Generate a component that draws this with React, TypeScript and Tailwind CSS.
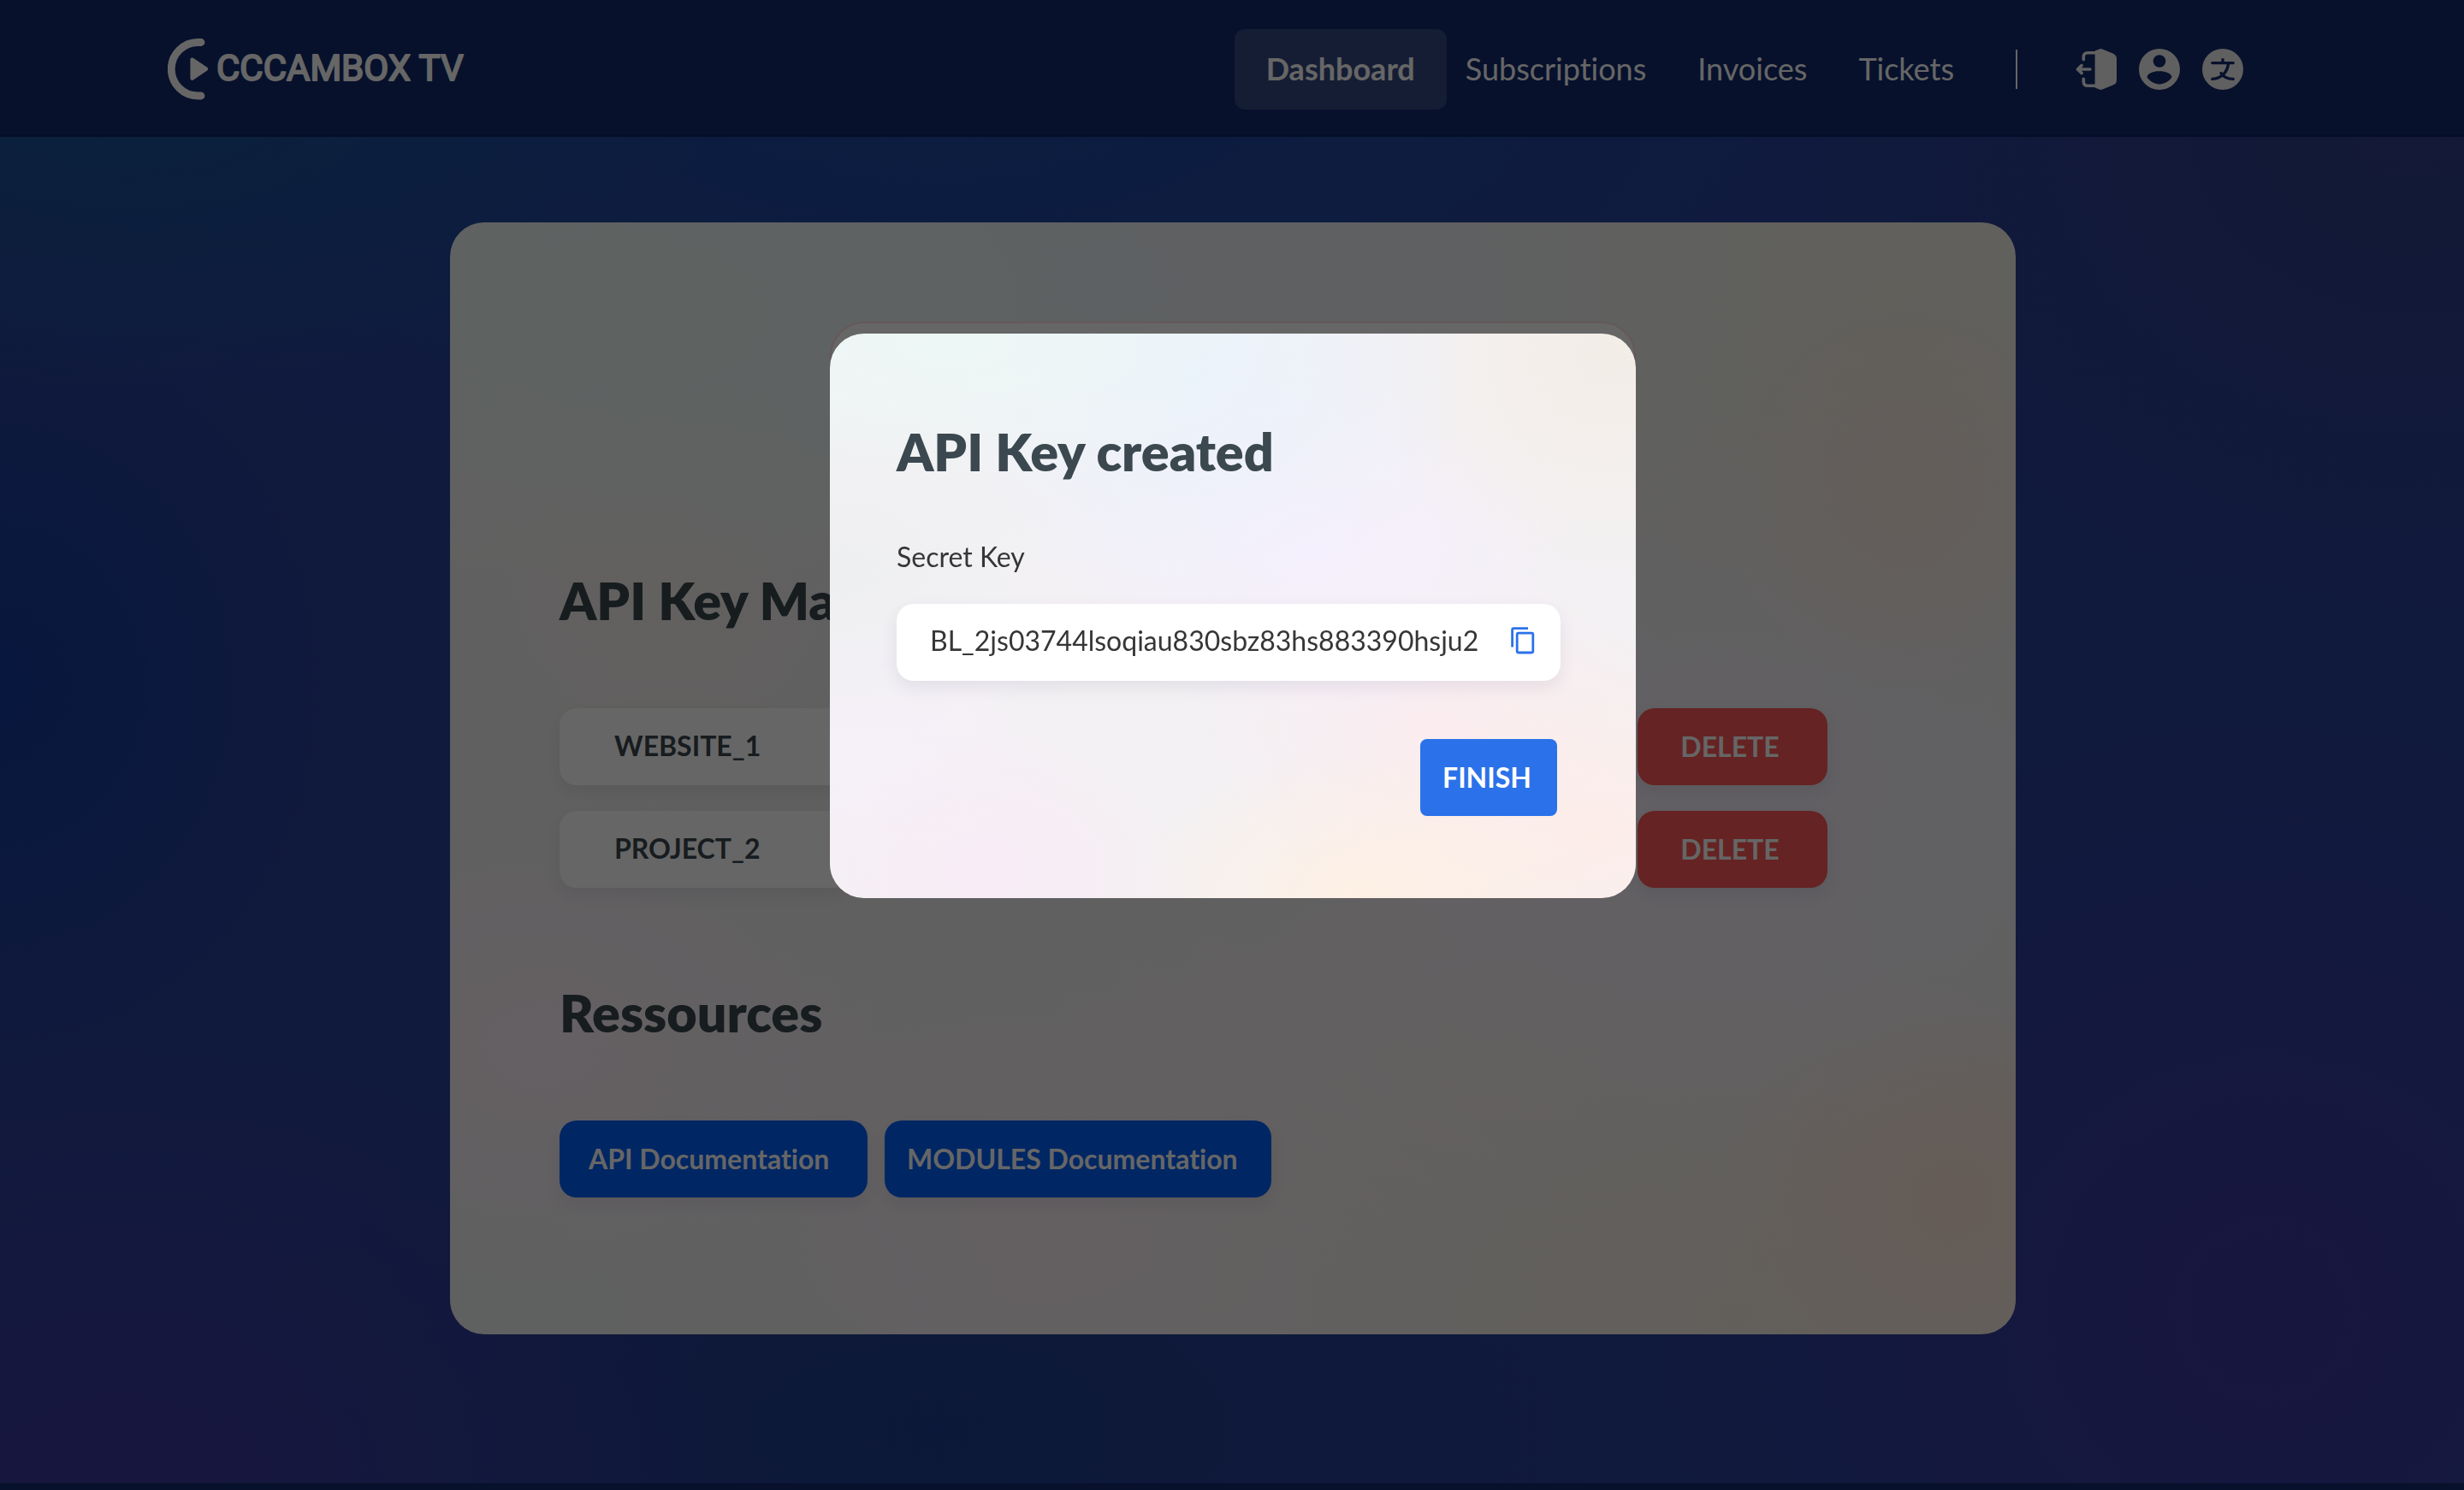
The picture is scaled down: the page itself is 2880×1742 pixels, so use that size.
import type { ReactNode } from "react";

const navLinks = ["Subscriptions", "Invoices", "Tickets"];

const apiKeys = [
  { id: "website", name: "WEBSITE_1", secret: "BL_2js0**********" },
  { id: "project", name: "PROJECT_2", secret: "BL_9ka1**********" },
];

function Logo() {
  return (
    <svg viewBox="0 0 350 72" className="h-[72px] w-[350px] text-white" fill="none" role="img" aria-label="CCCAMBOX TV">
      <path
        d="M39 4.5H35.5a31.25 31.25 0 0 0 0 62.5H39"
        stroke="currentColor"
        strokeWidth="8.8"
        strokeLinecap="round"
      />
      <path
        d="M28.6 24.6 45 35.6 28.6 46.6Z"
        fill="currentColor"
        stroke="currentColor"
        strokeWidth="4.4"
        strokeLinejoin="round"
      />
      <text
        x="57"
        y="49"
        fontSize="42"
        fontFamily="Roboto, sans-serif"
        fontWeight="400"
        fill="currentColor"
        stroke="currentColor"
        strokeWidth="2"
        strokeLinejoin="round"
      >
        CCCAMBOX TV
      </text>
    </svg>
  );
}

function LogoutIcon() {
  return (
    <svg viewBox="0 0 48 48" className="size-12" fill="none">
      <path
        d="M22.6 2.6 27.6.4Q29.4-.3 31.4.4L43.6 5.4Q48 7.4 48 11.6V36.4Q48 40.6 43.6 42.6L31.4 47.6Q29.4 48.3 27.6 47.6L22.6 45.4Z"
        fill="currentColor"
      />
      <path
        d="M9.3 12.6V9.6Q9.3 4.8 14.1 4.8H23M9.3 35.4V38.4Q9.3 43.2 14.1 43.2H23"
        stroke="currentColor"
        strokeWidth="3.6"
        strokeLinecap="round"
      />
      <path
        d="M2.4 24H17M7 19.6 2.4 24 7 28.4"
        stroke="currentColor"
        strokeWidth="3.6"
        strokeLinecap="round"
        strokeLinejoin="round"
      />
    </svg>
  );
}

function AccountIcon() {
  return (
    <svg viewBox="0 0 48 48" className="size-12" fill="currentColor">
      <path
        fillRule="evenodd"
        d="M24 0a24 24 0 1 1 0 48a24 24 0 1 1 0-48ZM24 7.2a7.3 7.3 0 1 0 0 14.6a7.3 7.3 0 1 0 0-14.6ZM10.2 31.2Q9 33 10.4 34.6C14 39 18.6 41.4 24 41.4S34 39 37.6 34.6Q39 33 37.8 31.2C35.6 28 30 26.2 24 26.2S12.4 28 10.2 31.2Z"
      />
    </svg>
  );
}

function LanguageIcon() {
  return (
    <svg viewBox="0 0 48 48" className="size-12">
      <circle cx="24" cy="24" r="24" fill="currentColor" />
      <path
        d="M11.8 16.6H36.2M24 12.6V16.6M30.6 17C29.6 27.6 22.6 34.6 11.8 35.4M22 28.6C25 33 30 35.4 36.2 35.4"
        className="stroke-[#122b6e]"
        strokeWidth="3.4"
        strokeLinecap="round"
        fill="none"
      />
    </svg>
  );
}

function CopyIcon() {
  return (
    <svg viewBox="0 0 28 32" className="h-8 w-7" fill="none" stroke="currentColor" strokeWidth="2.8">
      <path d="M20 1.6H3.2Q1.6 1.6 1.6 3.2V23.4" />
      <rect x="7.2" y="7.2" width="18.6" height="22.8" rx="1.6" />
    </svg>
  );
}

function IconButton({ label, children }: { label: string; children: ReactNode }) {
  return (
    <button type="button" aria-label={label} className="text-[#f0f0f0]">
      {children}
    </button>
  );
}

function Header() {
  return (
    <header className="flex items-center justify-between border-b-2 border-[#0c2364] bg-[#122b6e] pt-[34px] pr-[258px] pb-[30px] pl-[196px]">
      <a href="#home">
        <Logo />
      </a>
      <div className="flex items-center">
        <nav className="flex items-center text-4xl text-white">
          <a href="#dashboard" className="rounded-xl bg-white/15 px-[37px] pt-[26px] pb-7 leading-10 font-bold">
            Dashboard
          </a>
          <div className="ml-[22px] flex gap-[60px] pb-0.5">
            {navLinks.map((link) => (
              <a key={link} href={`#${link.toLowerCase()}`} className="leading-10">
                {link}
              </a>
            ))}
          </div>
        </nav>
        <div className="mr-[68px] ml-[72px] h-[46px] w-0.5 bg-white" />
        <div className="flex gap-[26px]">
          <IconButton label="Log out">
            <LogoutIcon />
          </IconButton>
          <IconButton label="Account">
            <AccountIcon />
          </IconButton>
          <IconButton label="Language">
            <LanguageIcon />
          </IconButton>
        </div>
      </div>
    </header>
  );
}

function KeyRow({ name, secret }: { name: string; secret: string }) {
  return (
    <li className="flex h-[90px] gap-5">
      <div className="flex w-[341px] items-center rounded-[20px] bg-white pb-0.5 pl-16 text-[#3b484f] shadow-[0_8px_20px_rgba(60,60,100,0.09)]">
        {name}
      </div>
      <div className="flex flex-1 items-center rounded-[20px] bg-white pl-16 font-normal text-[#363636]">
        {secret}
      </div>
      <button
        type="button"
        className="w-[222px] rounded-[20px] bg-[#fd5858] pr-1.5 text-white shadow-[0_8px_20px_rgba(60,60,100,0.09)]"
      >
        DELETE
      </button>
    </li>
  );
}

function ManagementCard() {
  return (
    <main className="mx-auto mt-[100px] w-full max-w-[1830px] rounded-[40px] bg-[radial-gradient(ellipse_35%_25%_at_12%_8%,#ebf8f4,transparent),radial-gradient(ellipse_45%_35%_at_42%_5%,#eaf1f7,transparent),radial-gradient(ellipse_12%_18%_at_93%_24%,#faeae1,transparent),radial-gradient(ellipse_35%_40%_at_92%_8%,#f2efe4,transparent),radial-gradient(ellipse_30%_35%_at_82%_50%,#f5effa,transparent),radial-gradient(ellipse_18%_25%_at_14%_32%,#f7f2ee,transparent),radial-gradient(ellipse_22%_22%_at_6%_74%,#fcf0f8,transparent),radial-gradient(ellipse_35%_22%_at_2%_98%,#edf0f1,transparent),radial-gradient(ellipse_15%_20%_at_96%_88%,#ffe6d8,transparent),radial-gradient(ellipse_40%_35%_at_82%_98%,#f6eee4,transparent),radial-gradient(ellipse_40%_30%_at_38%_92%,#faf0f5,transparent),radial-gradient(ellipse_30%_25%_at_68%_72%,#f8f0f2,transparent)] bg-[#f0f0f0] pt-[116px] pb-40 text-[#3b484f]">
      <section className="mx-auto h-[240px] w-full max-w-[942px] rounded-[40px] border-2 border-[#fbdcdf] bg-white" />
      <div className="mt-[49px] pr-[220px] pl-32">
        <h1 className="text-[61px] leading-[74px] font-extrabold">API Key Management</h1>
        <ul className="mt-[89px] flex flex-col gap-[30px] text-[32px] font-bold">
          {apiKeys.map((key) => (
            <KeyRow key={key.id} name={key.name} secret={key.secret} />
          ))}
        </ul>
        <h2 className="mt-[109px] text-[61px] leading-[74px] font-extrabold">Ressources</h2>
        <div className="mt-[89px] flex gap-5 text-[32px] font-bold text-white">
          <a
            href="#api-docs"
            className="flex h-[90px] w-[360px] items-center rounded-[20px] bg-[#005ffa] pl-[34px] shadow-[0_8px_20px_rgba(60,60,100,0.09)]"
          >
            API Documentation
          </a>
          <a
            href="#modules-docs"
            className="flex h-[90px] w-[452px] items-center rounded-[20px] bg-[#005ffa] pl-[26px] shadow-[0_8px_20px_rgba(60,60,100,0.09)]"
          >
            MODULES Documentation
          </a>
        </div>
      </div>
    </main>
  );
}

function KeyCreatedDialog() {
  return (
    <div className="fixed inset-0 flex items-start justify-center bg-black/60 pt-[390px] pl-0.5">
      <div
        role="dialog"
        aria-modal="true"
        aria-labelledby="dialog-title"
        className="w-full max-w-[942px] rounded-[40px] bg-[radial-gradient(ellipse_45%_25%_at_15%_2%,#ecf7f5,transparent),radial-gradient(ellipse_35%_45%_at_45%_6%,#ebf2fd,transparent),radial-gradient(ellipse_30%_40%_at_97%_4%,#f3ede7,transparent),radial-gradient(ellipse_35%_30%_at_60%_38%,#f6effd,transparent),radial-gradient(ellipse_25%_30%_at_2%_42%,#eeeff1,transparent),radial-gradient(ellipse_25%_25%_at_20%_95%,#f9ecf6,transparent),radial-gradient(ellipse_30%_25%_at_66%_100%,#fef0e4,transparent),radial-gradient(ellipse_40%_35%_at_94%_88%,#fdede9,transparent),radial-gradient(ellipse_30%_30%_at_2%_72%,#f6f0f9,transparent),radial-gradient(ellipse_30%_30%_at_75%_70%,#faecf2,transparent)] bg-[#f3f1f3] pt-[101px] pr-[88px] pb-24 pl-[78px] text-[32px] text-[#363636]"
      >
        <h2 id="dialog-title" className="text-[61px] leading-[74px] font-extrabold text-[#3b484f]">
          API Key created
        </h2>
        <label htmlFor="secret-key" className="mt-[66px] block leading-10">
          Secret Key
        </label>
        <div className="mt-[35px] flex h-[90px] items-center rounded-[20px] bg-white pr-[30px] pb-1 pl-[39px] shadow-[0_8px_20px_rgba(60,60,100,0.09)]">
          <input
            id="secret-key"
            readOnly
            value="BL_2js03744lsoqiau830sbz83hs883390hsju2"
            className="min-w-0 flex-1 bg-transparent outline-none"
          />
          <button type="button" aria-label="Copy secret key" className="text-[#2b72ea]">
            <CopyIcon />
          </button>
        </div>
        <div className="mt-[68px] flex justify-end pr-1">
          <button type="button" className="h-[90px] w-40 rounded-lg bg-[#2b72ea] pr-1 font-bold text-white">
            FINISH
          </button>
        </div>
      </div>
    </div>
  );
}

export default function App() {
  return (
    <div className="flex min-h-screen flex-col bg-[radial-gradient(ellipse_25%_20%_at_4%_6%,#1a5598,transparent),radial-gradient(ellipse_45%_30%_at_38%_6%,#1c4aa2,transparent),radial-gradient(ellipse_14%_26%_at_0%_46%,#143a98,transparent),radial-gradient(ellipse_25%_35%_at_98%_8%,#303f86,transparent),radial-gradient(ellipse_25%_30%_at_5%_100%,#3c389c,transparent),radial-gradient(ellipse_25%_40%_at_92%_88%,#3c389e,transparent),radial-gradient(ellipse_30%_25%_at_38%_96%,#203e8e,transparent)] bg-[#2a419a] font-['Lato',sans-serif] [font-variant-ligatures:none]">
      <Header />
      <div className="pl-0.5">
        <ManagementCard />
      </div>
      <footer className="mt-auto h-2 bg-[#122b6e]" />
      <KeyCreatedDialog />
    </div>
  );
}
